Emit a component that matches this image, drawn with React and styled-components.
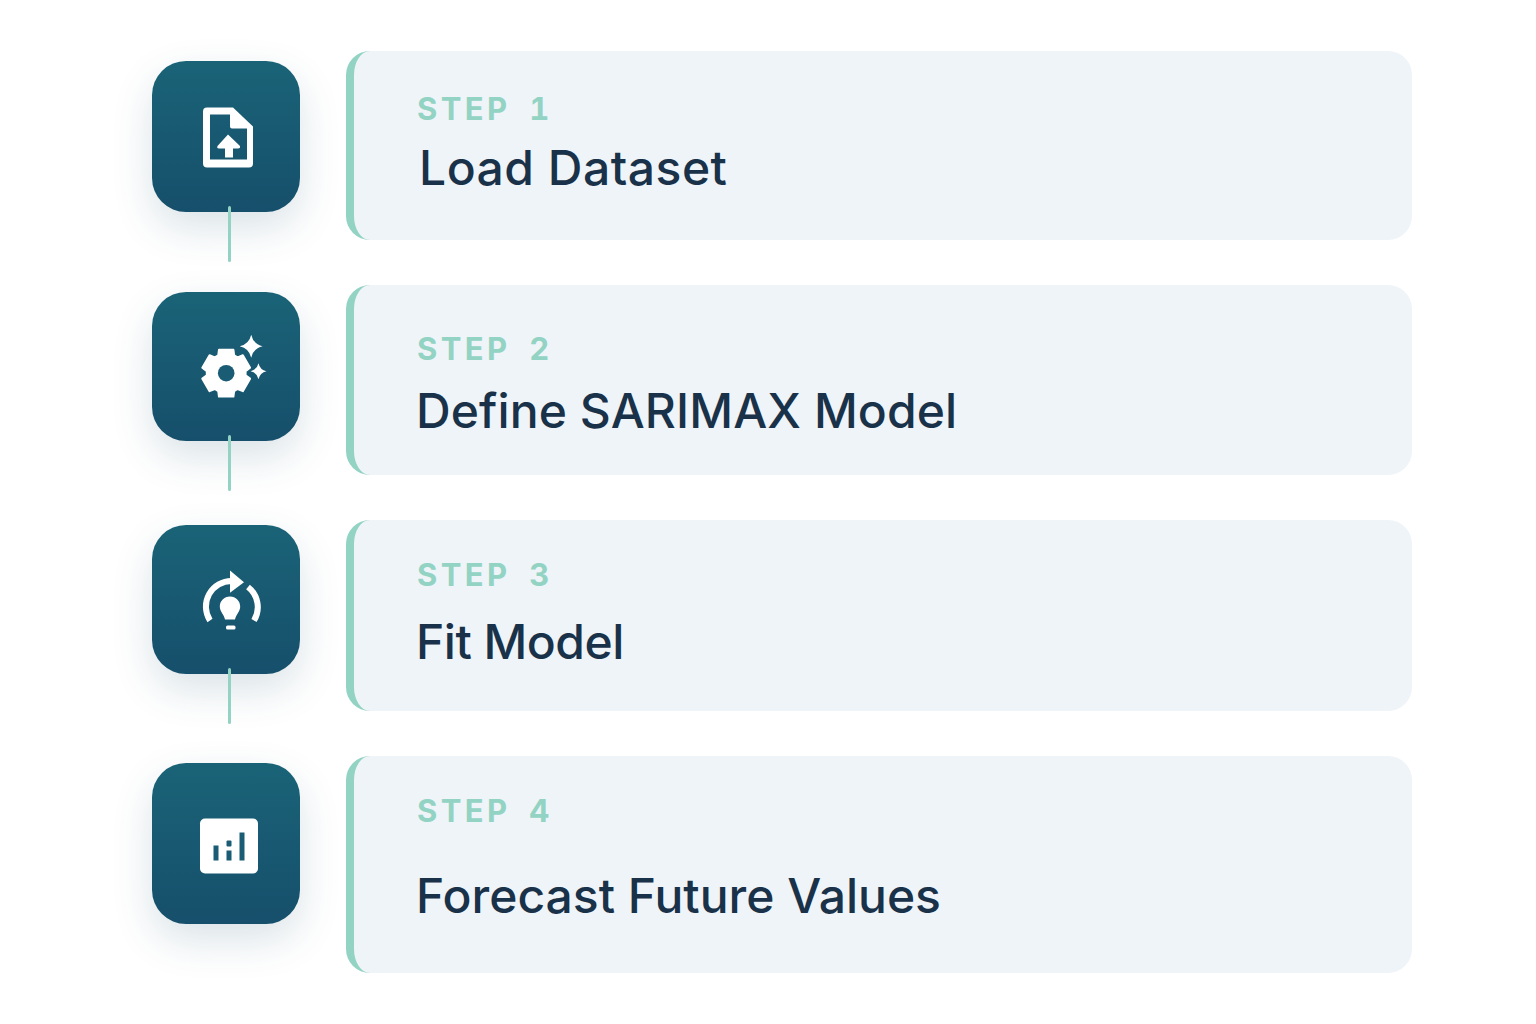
import React from "react";
import styled, { createGlobalStyle } from "styled-components";

const GlobalStyle = createGlobalStyle`
  html, body {
    margin: 0;
    padding: 0;
    background: #fff;
    font-family: "Inter", "Liberation Sans", sans-serif;
  }
`;

const Page = styled.div`
  box-sizing: border-box;
  width: 1536px;
  height: 1024px;
  padding: 51px 124px 0 151.5px;
  display: flex;
  flex-direction: column;
  gap: 45px;
`;

const Row = styled.div`
  display: grid;
  grid-template-columns: 148px 1fr;
  column-gap: 46.5px;
  height: ${(p) => p.$height}px;
`;

const Tile = styled.div`
  position: relative;
  margin-top: ${(p) => p.$top}px;
  height: ${(p) => p.$height}px;
  border-radius: 34px;
  background: linear-gradient(180deg, #1a6377 0%, #164f6b 100%);
  box-shadow: 0 16px 40px rgba(22, 79, 107, 0.16);
  display: flex;
  align-items: center;
  justify-content: center;
`;

const IconSlot = styled.svg`
  display: block;
  flex: none;
  transform: translate(${(p) => p.$dx}px, ${(p) => p.$dy}px);
`;

const Connector = styled.div`
  position: absolute;
  left: 76.5px;
  bottom: -50px;
  width: 3px;
  height: 56px;
  border-radius: 2px;
  background: #93d3c3;
`;

const Card = styled.div`
  box-sizing: border-box;
  height: 100%;
  padding: ${(p) => p.$top}px 0 0 63px;
  background: #eff4f8;
  border-left: 8px solid #93d3c3;
  border-radius: 24px;
  display: flex;
  flex-direction: column;
`;

const StepLabel = styled.div`
  font-size: 31px;
  line-height: 36px;
  font-weight: 700;
  letter-spacing: 3.4px;
  word-spacing: 7px;
  font-variant-numeric: tabular-nums;
  color: #93d3c3;
`;

const StepTitle = styled.div`
  margin-top: ${(p) => p.$gap}px;
  margin-left: ${(p) => p.$indent}px;
  font-size: 48px;
  line-height: 56px;
  font-weight: 550;
  letter-spacing: ${(p) => p.$spacing || 0}px;
  color: #193249;
`;

const star = (cx, cy, r) =>
  `M${cx} ${cy - r}Q${cx + r * 0.18} ${cy - r * 0.18} ${cx + r} ${cy}Q${cx + r * 0.18} ${cy + r * 0.18} ${cx} ${cy + r}Q${cx - r * 0.18} ${cy + r * 0.18} ${cx - r} ${cy}Q${cx - r * 0.18} ${cy - r * 0.18} ${cx} ${cy - r}Z`;

// six toothed gear, one tooth pointing straight up
const gearPoints = (cx, cy, outer, root) => {
  const pts = [];
  for (let i = 0; i < 6; i++) {
    const a = (i * Math.PI) / 3 - Math.PI / 2;
    [
      [root, -0.42],
      [outer, -0.3],
      [outer, 0.3],
      [root, 0.42],
    ].forEach(([r, d]) => {
      pts.push(`${(cx + r * Math.cos(a + d)).toFixed(2)} ${(cy + r * Math.sin(a + d)).toFixed(2)}`);
    });
  }
  return `M${pts.join("L")}Z`;
};

const FileIcon = () => (
  <IconSlot width="80" height="80" viewBox="0 0 80 80" $dx={4} $dy={-1.5}>
    <path
      fill="#fff"
      fillRule="evenodd"
      d="M17 12H43L63 31V68Q63 72 59 72H17Q13 72 13 68V16Q13 12 17 12ZM20 19V64H57V33H42Q40 33 40 31V19Z"
    />
    <path fill="#fff" d="M38 39L50 50.5Q50.5 53 48 53H43V62H35V53H29Q26.5 53 27.5 50.5Z" />
  </IconSlot>
);

const GearIcon = () => (
  <IconSlot width="85" height="75" viewBox="0 0 85 75" $dx={6.5} $dy={1.5}>
    <path
      fill="#fff"
      stroke="#fff"
      strokeWidth="2"
      strokeLinejoin="round"
      d={gearPoints(36.7, 42.7, 24.5, 19.5)}
    />
    <circle cx="36.7" cy="42.7" r="8.3" fill="#195c74" />
    <path fill="#fff" d={star(61.7, 15.7, 11.5)} />
    <path fill="#fff" d={star(69, 40.7, 8)} />
  </IconSlot>
);

const BulbIcon = () => (
  <IconSlot width="80" height="80" viewBox="0 0 80 80" $dx={4} $dy={0.5}>
    <path fill="none" stroke="#fff" strokeWidth="6" d="M20 60A25.6 25.6 0 0 1 42 20.5" />
    <path fill="none" stroke="#fff" strokeWidth="6" d="M58 26.5A25.6 25.6 0 0 1 64 60" />
    <path fill="#fff" d="M40 10L54 21.7L40 32.3Z" />
    <path fill="#fff" d="M40 36C45.8 36 50.2 40.5 50.2 46C50.2 51 46 54 45 59H35C34 54 29.8 51 29.8 46C29.8 40.5 34.2 36 40 36Z" />
    <rect x="36" y="65" width="9.5" height="4" rx="1.5" fill="#fff" />
  </IconSlot>
);

const ChartIcon = () => (
  <IconSlot width="80" height="80" viewBox="0 0 80 80" $dx={4} $dy={1.5}>
    <rect x="10" y="13" width="58" height="55" rx="5" fill="#fff" />
    <rect x="23.5" y="40" width="5" height="15" fill="#195c74" />
    <rect x="36.5" y="35" width="5" height="6" rx="1" fill="#195c74" />
    <rect x="36.5" y="45" width="5" height="10" fill="#195c74" />
    <rect x="49.5" y="27" width="5" height="28" fill="#195c74" />
  </IconSlot>
);

const steps = [
  { label: "STEP 1", title: "Load Dataset", Icon: FileIcon, rowH: 189, tileTop: 10, tileH: 151, top: 40, gap: 13, indent: 2, spacing: 0.5, line: true },
  { label: "STEP 2", title: "Define SARIMAX Model", Icon: GearIcon, rowH: 190, tileTop: 7, tileH: 149, top: 46, gap: 16, indent: -1, spacing: 0.1, line: true },
  { label: "STEP 3", title: "Fit Model", Icon: BulbIcon, rowH: 191, tileTop: 5, tileH: 149, top: 37, gap: 21, indent: -1, spacing: -0.5, line: true },
  { label: "STEP 4", title: "Forecast Future Values", Icon: ChartIcon, rowH: 217, tileTop: 7, tileH: 161, top: 37, gap: 39, indent: -1 },
];

export default function App() {
  return (
    <>
      <GlobalStyle />
      <Page>
        {steps.map(({ label, title, Icon, rowH, tileTop, tileH, top, gap, indent, spacing, line }) => (
          <Row key={label} $height={rowH}>
            <Tile $top={tileTop} $height={tileH}>
              <Icon />
              {line && <Connector />}
            </Tile>
            <Card $top={top}>
              <StepLabel>{label}</StepLabel>
              <StepTitle $gap={gap} $indent={indent} $spacing={spacing}>{title}</StepTitle>
            </Card>
          </Row>
        ))}
      </Page>
    </>
  );
}
